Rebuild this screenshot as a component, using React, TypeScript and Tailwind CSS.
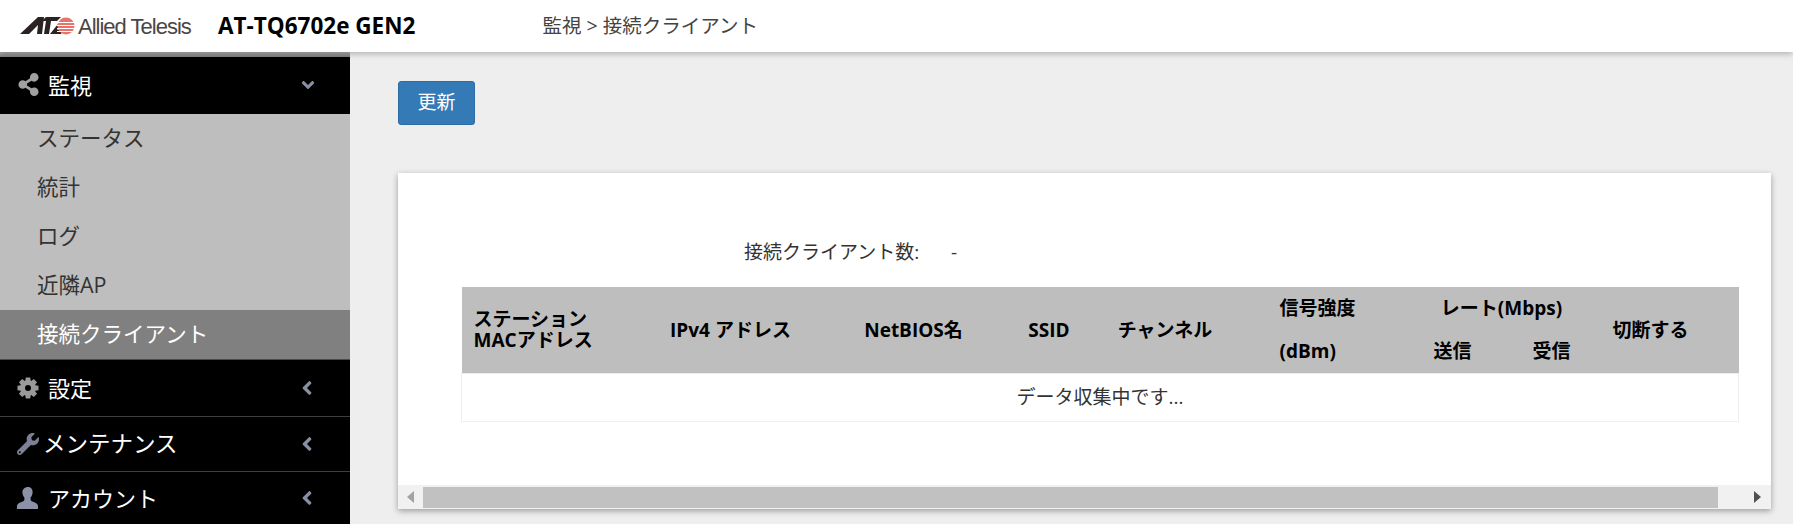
import { FaAngleDown, FaAngleLeft, FaShareAlt, FaWrench } from "react-icons/fa";
import type { ReactNode } from "react";

const jp = "font-['Open_Sans','Noto_Sans_CJK_JP',sans-serif]";

const Logo = () => (
  <div className="flex items-center w-[218px] pl-[20px]">
    <svg width="55" height="20" viewBox="0 0 55 20" className="shrink-0">
      <polygon points="0,18 18,1 24,1 22,18 17,18 18,9 9,18" fill="#2b2323" />
      <polygon points="24,18 26,5 21.5,5 26,1 41,1 37,5 31,5 29,18" fill="#2b2323" />
      <polygon points="30,18 42,3 44,7 37,14 43,14 41,18" fill="#2b2323" />
      <circle cx="46" cy="10" r="8.5" fill="#e8736b" />
      <rect x="37" y="6" width="18" height="1" fill="#fff" />
      <rect x="37" y="9" width="18" height="1" fill="#fff" />
      <rect x="37" y="12" width="18" height="1" fill="#fff" />
      <rect x="37" y="15" width="18" height="1" fill="#fff" />
    </svg>
    <span className="ml-[3px] text-[22px] tracking-[-1px] text-[#4b4645] font-['Liberation_Sans',sans-serif] whitespace-nowrap">
      Allied Telesis
    </span>
  </div>
);

const CogIcon = () => (
  <svg width="22" height="22" viewBox="0 0 22 22" fill="#9a9a9a">
    {[0, 45, 90, 135, 180, 225, 270, 315].map((deg) => (
      <polygon key={deg} points="8.8,0.5 13.2,0.5 14,5 8,5" transform={`rotate(${deg} 11 11)`} />
    ))}
    <path fillRule="evenodd" d="M11 3.5a7.5 7.5 0 1 0 0 15a7.5 7.5 0 1 0 0-15zM11 8a3 3 0 1 1 0 6a3 3 0 1 1 0-6z" />
  </svg>
);

const UserIcon = () => (
  <svg width="22" height="22" viewBox="0 0 22 22" fill="#8c91a8">
    <path d="M11 0c3 0 4.600 2.200 4.600 5.200c0 2.200-.8 4-2 5.200v2.400c0 .9 1 1.400 3 2.200c2.700 1 4.400 2 4.400 4.200V22H0v-2.800c0-2.200 1.700-3.200 4.400-4.200c2-.8 3-1.300 3-2.200v-2.400c-1.200-1.200-2-3-2-5.200C5.400 2.200 8 0 11 0z" />
  </svg>
);

const MainItem = ({ icon, label, open, h, border, shift }: { icon: ReactNode; label: string; open?: boolean; h: string; border?: boolean; shift?: boolean }) => (
  <div className={`flex items-center bg-black text-white pl-[16px] pr-[32px] ${h} ${border ? "border-b border-[#3f3f3f]" : ""} ${open ? "pb-[2px]" : ""}`}>
    <span className="w-[24px] flex justify-center shrink-0">{icon}</span>
    <span className={`leading-none flex-1 ${shift ? "ml-[3px] text-[22.5px]" : "ml-[8px] text-[22px]"}`}>{label}</span>
    {open ? <FaAngleDown className="text-[#8a8ea3] text-[20px]" /> : <FaAngleLeft className="text-[#8a8ea3] text-[22px]" />}
  </div>
);

const SubItem = ({ label, active }: { label: string; active?: boolean }) => (
  <div className={`flex items-center pl-[37px] text-[21.5px] ${active ? "bg-[#808080] text-white border-b border-[#4a4a4a] h-[50px]" : "bg-[#bebebe] text-[#333] h-[49px]"}`}>
    {label}
  </div>
);

const Sidebar = () => (
  <aside className="w-[350px] shrink-0 bg-black">
    <div className="h-[5px] bg-gradient-to-b from-[#b4b4b4] to-[#7c7c7c]" />
    <MainItem icon={<FaShareAlt className="text-[23px] text-[#a0a0a0]" />} label="監視" open h="h-[57px]" />
    <SubItem label="ステータス" />
    <SubItem label="統計" />
    <SubItem label="ログ" />
    <SubItem label="近隣AP" />
    <SubItem label="接続クライアント" active />
    <MainItem icon={<CogIcon />} label="設定" h="h-[57px]" border />
    <MainItem icon={<FaWrench className="text-[22px] text-[#7c8196]" />} label="メンテナンス" h="h-[55px]" border shift />
    <MainItem icon={<UserIcon />} label="アカウント" h="h-[52px]" />
  </aside>
);

const ClientTable = () => (
  <table className="table-fixed border-collapse w-[1277px] ml-[63px] text-[19px] text-black">
    <colgroup>
      <col className="w-[177px]" />
      <col className="w-[184px]" />
      <col className="w-[182px]" />
      <col className="w-[89px]" />
      <col className="w-[143px]" />
      <col className="w-[166px]" />
      <col className="w-[100px]" />
      <col className="w-[98px]" />
      <col className="w-[138px]" />
    </colgroup>
    <thead className="bg-[#bebebe]">
      <tr className="h-[43px]">
        <th rowSpan={2} className="text-left pl-[12px] leading-[21px] font-bold">
          ステーション
          <br />
          MACアドレス
        </th>
        <th rowSpan={2} className="font-bold">IPv4 アドレス</th>
        <th rowSpan={2} className="font-bold">NetBIOS名</th>
        <th rowSpan={2} className="font-bold">SSID</th>
        <th rowSpan={2} className="font-bold">チャンネル</th>
        <th className="text-left pl-[43px] font-bold">信号強度</th>
        <th colSpan={2} className="font-bold">レート(Mbps)</th>
        <th rowSpan={2} className="font-bold pr-[38px]">切断する</th>
      </tr>
      <tr className="h-[43px]">
        <th className="text-left pl-[43px] font-bold">(dBm)</th>
        <th className="font-bold">送信</th>
        <th className="font-bold">受信</th>
      </tr>
    </thead>
    <tbody>
      <tr className="h-[48px]">
        <td colSpan={9} className="text-center text-[#333] border border-[#eeeeee]">
          データ収集中です...
        </td>
      </tr>
    </tbody>
  </table>
);

const Scrollbar = () => (
  <div className="flex items-center h-[24px] bg-[#f1f1f1]">
    <div className="w-[25px] flex justify-center">
      <span className="border-y-[6px] border-r-[7px] border-y-transparent border-r-[#a3a3a3]" />
    </div>
    <div className="w-[1295px] h-[21px] bg-[#c1c1c1]" />
    <div className="flex-1 flex justify-end pr-[10px]">
      <span className="border-y-[6px] border-l-[7px] border-y-transparent border-l-[#505050]" />
    </div>
  </div>
);

export default function App() {
  return (
    <div className={`h-[524px] w-[1793px] overflow-hidden bg-[#eeeeee] flex flex-col ${jp}`}>
      <header className="relative z-10 h-[52px] bg-white flex items-center shadow-[0_2px_6px_rgba(0,0,0,0.25)]">
        <Logo />
        <h1 className="text-[22.5px] font-bold text-black whitespace-nowrap">AT-TQ6702e GEN2</h1>
        <div className="ml-[127px] text-[19.5px] text-[#444] whitespace-nowrap">監視 &gt; 接続クライアント</div>
      </header>
      <div className="flex flex-1 min-h-0">
        <Sidebar />
        <main className="flex-1 pl-[48px] pt-[29px]">
          <button className="w-[77px] h-[44px] rounded-[3px] bg-[#337ab7] border border-[#2e6da4] text-white text-[19px] pb-[2px]">更新</button>
          <section className="mt-[48px] w-[1373px] h-[336px] bg-white shadow-[0_2px_6px_rgba(0,0,0,0.35)] flex flex-col">
            <div className="flex-1 pt-[69px]">
              <div className="flex h-[24px] items-center pl-[346px] text-[19px] text-[#333] mb-[21px] -translate-y-[2px]">
                <span className="w-[207px]">接続クライアント数:</span>
                <span>-</span>
              </div>
              <ClientTable />
            </div>
            <Scrollbar />
          </section>
        </main>
      </div>
    </div>
  );
}
